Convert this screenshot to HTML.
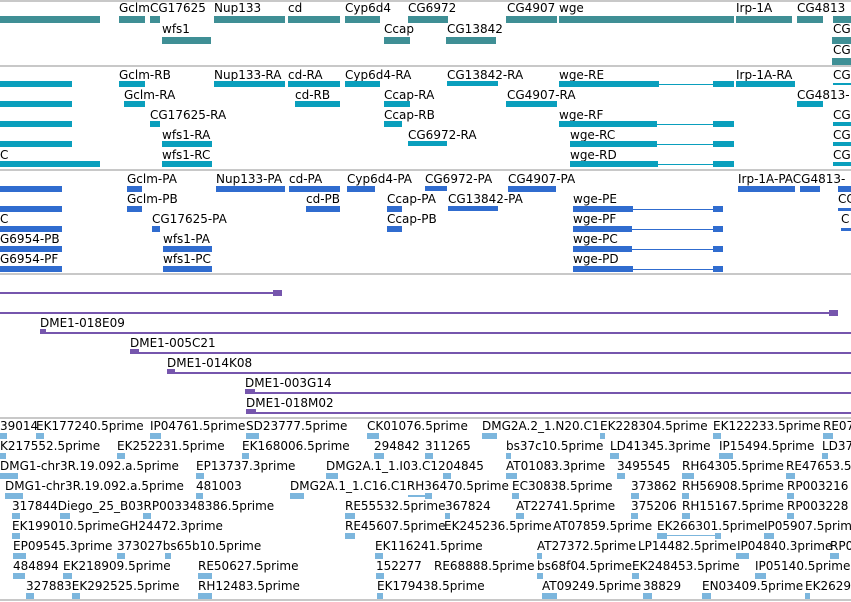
<!DOCTYPE html>
<html><head><meta charset="utf-8"><style>
body{margin:0;width:851px;height:602px;overflow:hidden;background:#fff;position:relative;font-family:"DejaVu Sans","Liberation Sans",sans-serif}
div{position:absolute}
.t{font-size:12px;line-height:14px;color:#000;white-space:nowrap}
.s{left:0;width:851px;height:2px;background:#c8c8c8}
.a{background:#3f8f95;height:7px}
.b{background:#0a9fbd;height:6px}
.c{background:#306ccf;height:6px}
.p{background:#7656ad;height:2px}
.e{background:#7cb6dd;height:6px}
.l{height:1px}
</style></head><body>
<div class="s" style="top:0"></div>
<div class="s" style="top:65px"></div>
<div class="s" style="top:169px"></div>
<div class="s" style="top:273px"></div>
<div class="s" style="top:417px"></div>
<div class="s" style="top:599px"></div>

<!-- track 1 -->
<div class="t" style="left:119px;top:1px">Gclm</div>
<div class="t" style="left:150px;top:1px">CG17625</div>
<div class="t" style="left:214px;top:1px">Nup133</div>
<div class="t" style="left:288px;top:1px">cd</div>
<div class="t" style="left:345px;top:1px">Cyp6d4</div>
<div class="t" style="left:408px;top:1px">CG6972</div>
<div class="t" style="left:507px;top:1px">CG4907</div>
<div class="t" style="left:559px;top:1px">wge</div>
<div class="t" style="left:736px;top:1px">Irp-1A</div>
<div class="t" style="left:797px;top:1px">CG4813</div>
<div class="a" style="left:0;width:100px;top:16px"></div>
<div class="a" style="left:119px;width:26px;top:16px"></div>
<div class="a" style="left:150px;width:10px;top:16px"></div>
<div class="a" style="left:214px;width:71px;top:16px"></div>
<div class="a" style="left:288px;width:52px;top:16px"></div>
<div class="a" style="left:345px;width:35px;top:16px"></div>
<div class="a" style="left:408px;width:40px;top:16px"></div>
<div class="a" style="left:506px;width:51px;top:16px"></div>
<div class="a" style="left:559px;width:175px;top:16px"></div>
<div class="a" style="left:736px;width:56px;top:16px"></div>
<div class="a" style="left:797px;width:26px;top:16px"></div>
<div class="a" style="left:833px;width:18px;top:16px"></div>
<div class="t" style="left:162px;top:22px">wfs1</div>
<div class="t" style="left:384px;top:22px">Ccap</div>
<div class="t" style="left:447px;top:22px">CG13842</div>
<div class="t" style="left:833px;top:22px">CG</div>
<div class="a" style="left:162px;width:49px;top:37px"></div>
<div class="a" style="left:384px;width:26px;top:37px"></div>
<div class="a" style="left:446px;width:50px;top:37px"></div>
<div class="a" style="left:832px;width:19px;top:37px"></div>
<div class="t" style="left:833px;top:43px">CG</div>
<div class="a" style="left:832px;width:19px;top:58px"></div>

<!-- track 2 -->
<div class="t" style="left:119px;top:68px">Gclm-RB</div>
<div class="t" style="left:214px;top:68px">Nup133-RA</div>
<div class="t" style="left:288px;top:68px">cd-RA</div>
<div class="t" style="left:345px;top:68px">Cyp6d4-RA</div>
<div class="t" style="left:447px;top:68px">CG13842-RA</div>
<div class="t" style="left:559px;top:68px">wge-RE</div>
<div class="t" style="left:736px;top:68px">Irp-1A-RA</div>
<div class="t" style="left:833px;top:68px">CG</div>
<div class="b" style="left:0;width:72px;top:81px"></div>
<div class="b" style="left:119px;width:26px;top:81px"></div>
<div class="b" style="left:214px;width:71px;top:81px"></div>
<div class="b" style="left:288px;width:52px;top:81px"></div>
<div class="b" style="left:345px;width:35px;top:81px"></div>
<div class="b" style="left:447px;width:51px;top:81px;height:5px"></div>
<div class="b" style="left:559px;width:100px;top:81px"></div>
<div class="b l" style="left:659px;width:75px;top:84px"></div>
<div class="b" style="left:713px;width:21px;top:81px"></div>
<div class="b" style="left:736px;width:59px;top:81px"></div>
<div class="b" style="left:833px;width:18px;top:83px;height:2px"></div>

<div class="t" style="left:124px;top:88px">Gclm-RA</div>
<div class="t" style="left:295px;top:88px">cd-RB</div>
<div class="t" style="left:384px;top:88px">Ccap-RA</div>
<div class="t" style="left:507px;top:88px">CG4907-RA</div>
<div class="t" style="left:797px;top:88px">CG4813-</div>
<div class="b" style="left:0;width:72px;top:101px"></div>
<div class="b" style="left:124px;width:21px;top:101px"></div>
<div class="b" style="left:295px;width:45px;top:101px"></div>
<div class="b" style="left:384px;width:26px;top:101px"></div>
<div class="b" style="left:506px;width:51px;top:101px"></div>
<div class="b" style="left:797px;width:26px;top:101px"></div>

<div class="t" style="left:150px;top:108px">CG17625-RA</div>
<div class="t" style="left:384px;top:108px">Ccap-RB</div>
<div class="t" style="left:559px;top:108px">wge-RF</div>
<div class="t" style="left:833px;top:108px">CG</div>
<div class="b" style="left:0;width:72px;top:121px"></div>
<div class="b" style="left:150px;width:10px;top:121px"></div>
<div class="b" style="left:384px;width:18px;top:121px"></div>
<div class="b" style="left:559px;width:98px;top:121px"></div>
<div class="b l" style="left:657px;width:77px;top:124px"></div>
<div class="b" style="left:713px;width:21px;top:121px"></div>
<div class="b" style="left:833px;width:18px;top:122px;height:4px"></div>

<div class="t" style="left:162px;top:128px">wfs1-RA</div>
<div class="t" style="left:408px;top:128px">CG6972-RA</div>
<div class="t" style="left:570px;top:128px">wge-RC</div>
<div class="t" style="left:833px;top:128px">CG</div>
<div class="b" style="left:0;width:72px;top:141px"></div>
<div class="b" style="left:162px;width:50px;top:141px"></div>
<div class="b" style="left:408px;width:39px;top:141px;height:5px"></div>
<div class="b" style="left:570px;width:87px;top:141px"></div>
<div class="b l" style="left:657px;width:77px;top:144px"></div>
<div class="b" style="left:713px;width:21px;top:141px"></div>
<div class="b" style="left:833px;width:18px;top:142px;height:4px"></div>

<div class="t" style="left:0;top:148px">C</div>
<div class="t" style="left:162px;top:148px">wfs1-RC</div>
<div class="t" style="left:570px;top:148px">wge-RD</div>
<div class="t" style="left:833px;top:148px">CG</div>
<div class="b" style="left:0;width:100px;top:161px"></div>
<div class="b" style="left:162px;width:50px;top:161px"></div>
<div class="b" style="left:570px;width:88px;top:161px"></div>
<div class="b l" style="left:658px;width:76px;top:164px"></div>
<div class="b" style="left:713px;width:21px;top:161px"></div>
<div class="b" style="left:833px;width:18px;top:162px;height:4px"></div>

<!-- track 3 -->
<div class="t" style="left:127px;top:172px">Gclm-PA</div>
<div class="t" style="left:216px;top:172px">Nup133-PA</div>
<div class="t" style="left:289px;top:172px">cd-PA</div>
<div class="t" style="left:347px;top:172px">Cyp6d4-PA</div>
<div class="t" style="left:425px;top:172px">CG6972-PA</div>
<div class="t" style="left:508px;top:172px">CG4907-PA</div>
<div class="t" style="left:738px;top:172px">Irp-1A-PACG4813-</div>
<div class="c" style="left:0;width:62px;top:186px"></div>
<div class="c" style="left:127px;width:15px;top:186px"></div>
<div class="c" style="left:216px;width:69px;top:186px"></div>
<div class="c" style="left:289px;width:51px;top:186px"></div>
<div class="c" style="left:347px;width:28px;top:186px"></div>
<div class="c" style="left:425px;width:22px;top:186px;height:5px"></div>
<div class="c" style="left:508px;width:48px;top:186px"></div>
<div class="c" style="left:738px;width:57px;top:186px"></div>
<div class="c" style="left:800px;width:20px;top:186px"></div>
<div class="c" style="left:838px;width:13px;top:186px"></div>

<div class="t" style="left:127px;top:192px">Gclm-PB</div>
<div class="t" style="left:306px;top:192px">cd-PB</div>
<div class="t" style="left:387px;top:192px">Ccap-PA</div>
<div class="t" style="left:448px;top:192px">CG13842-PA</div>
<div class="t" style="left:573px;top:192px">wge-PE</div>
<div class="t" style="left:838px;top:192px">CC</div>
<div class="c" style="left:0;width:62px;top:206px"></div>
<div class="c" style="left:127px;width:15px;top:206px"></div>
<div class="c" style="left:306px;width:34px;top:206px"></div>
<div class="c" style="left:387px;width:15px;top:206px"></div>
<div class="c" style="left:448px;width:50px;top:206px;height:5px"></div>
<div class="c" style="left:573px;width:60px;top:206px"></div>
<div class="c l" style="left:633px;width:90px;top:209px"></div>
<div class="c" style="left:713px;width:10px;top:206px"></div>
<div class="c" style="left:838px;width:13px;top:208px;height:3px"></div>

<div class="t" style="left:0;top:212px">C</div>
<div class="t" style="left:152px;top:212px">CG17625-PA</div>
<div class="t" style="left:387px;top:212px">Ccap-PB</div>
<div class="t" style="left:573px;top:212px">wge-PF</div>
<div class="t" style="left:841px;top:212px">C</div>
<div class="c" style="left:0;width:62px;top:226px"></div>
<div class="c" style="left:152px;width:8px;top:226px"></div>
<div class="c" style="left:387px;width:15px;top:226px"></div>
<div class="c" style="left:573px;width:59px;top:226px"></div>
<div class="c l" style="left:632px;width:91px;top:229px"></div>
<div class="c" style="left:713px;width:10px;top:226px"></div>
<div class="c" style="left:841px;width:10px;top:228px;height:3px"></div>

<div class="t" style="left:0;top:232px">G6954-PB</div>
<div class="t" style="left:163px;top:232px">wfs1-PA</div>
<div class="t" style="left:573px;top:232px">wge-PC</div>
<div class="c" style="left:0;width:62px;top:246px"></div>
<div class="c" style="left:163px;width:49px;top:246px"></div>
<div class="c" style="left:573px;width:59px;top:246px"></div>
<div class="c l" style="left:632px;width:91px;top:249px"></div>
<div class="c" style="left:713px;width:10px;top:246px"></div>

<div class="t" style="left:0;top:252px">G6954-PF</div>
<div class="t" style="left:163px;top:252px">wfs1-PC</div>
<div class="t" style="left:573px;top:252px">wge-PD</div>
<div class="c" style="left:0;width:62px;top:266px"></div>
<div class="c" style="left:163px;width:49px;top:266px"></div>
<div class="c" style="left:573px;width:60px;top:266px"></div>
<div class="c l" style="left:633px;width:90px;top:269px"></div>
<div class="c" style="left:713px;width:10px;top:266px"></div>

<!-- track 4 -->
<div class="p" style="left:0;width:280px;top:292px"></div>
<div class="p" style="left:273px;width:9px;top:290px;height:6px"></div>
<div class="p" style="left:0;width:836px;top:312px"></div>
<div class="p" style="left:829px;width:9px;top:310px;height:6px"></div>
<div class="t" style="left:40px;top:316px">DME1-018E09</div>
<div class="p" style="left:40px;width:811px;top:332px"></div>
<div class="p" style="left:40px;width:6px;top:329px;height:5px"></div>
<div class="t" style="left:130px;top:336px">DME1-005C21</div>
<div class="p" style="left:130px;width:721px;top:352px"></div>
<div class="p" style="left:130px;width:9px;top:349px;height:5px"></div>
<div class="t" style="left:167px;top:356px">DME1-014K08</div>
<div class="p" style="left:167px;width:684px;top:372px"></div>
<div class="p" style="left:167px;width:8px;top:369px;height:5px"></div>
<div class="t" style="left:245px;top:376px">DME1-003G14</div>
<div class="p" style="left:245px;width:606px;top:392px"></div>
<div class="p" style="left:245px;width:10px;top:389px;height:5px"></div>
<div class="t" style="left:246px;top:396px">DME1-018M02</div>
<div class="p" style="left:246px;width:605px;top:412px"></div>
<div class="p" style="left:246px;width:10px;top:409px;height:5px"></div>

<!-- track 5 -->
<div class="t" style="left:0;top:419px">39014</div><div class="t" style="left:36px;top:419px">EK177240.5prime</div><div class="t" style="left:150px;top:419px">IP04761.5prime</div><div class="t" style="left:246px;top:419px">SD23777.5prime</div><div class="t" style="left:367px;top:419px">CK01076.5prime</div><div class="t" style="left:482px;top:419px">DMG2A.2_1.N20.C1</div><div class="t" style="left:600px;top:419px">EK228304.5prime</div><div class="t" style="left:713px;top:419px">EK122233.5prime</div><div class="t" style="left:823px;top:419px">RE07</div>
<div class="e" style="left:0;width:7px;top:433px"></div><div class="e" style="left:36px;width:8px;top:433px"></div><div class="e" style="left:150px;width:11px;top:433px"></div><div class="e" style="left:246px;width:13px;top:433px"></div><div class="e" style="left:367px;width:12px;top:433px"></div><div class="e" style="left:482px;width:15px;top:433px"></div><div class="e" style="left:600px;width:5px;top:433px"></div><div class="e" style="left:713px;width:8px;top:433px"></div><div class="e" style="left:823px;width:10px;top:433px"></div>

<div class="t" style="left:0;top:439px">K217552.5prime</div><div class="t" style="left:117px;top:439px">EK252231.5prime</div><div class="t" style="left:242px;top:439px">EK168006.5prime</div><div class="t" style="left:374px;top:439px">294842</div><div class="t" style="left:425px;top:439px">311265</div><div class="t" style="left:506px;top:439px">bs37c10.5prime</div><div class="t" style="left:610px;top:439px">LD41345.3prime</div><div class="t" style="left:719px;top:439px">IP15494.5prime</div><div class="t" style="left:822px;top:439px">LD370</div>
<div class="e" style="left:0;width:6px;top:453px"></div><div class="e" style="left:117px;width:8px;top:453px"></div><div class="e" style="left:242px;width:7px;top:453px"></div><div class="e" style="left:374px;width:10px;top:453px"></div><div class="e" style="left:425px;width:8px;top:453px"></div><div class="e" style="left:506px;width:5px;top:453px"></div><div class="e" style="left:610px;width:9px;top:453px"></div><div class="e" style="left:719px;width:14px;top:453px"></div><div class="e" style="left:822px;width:6px;top:453px"></div>

<div class="t" style="left:0;top:459px">DMG1-chr3R.19.092.a.5prime</div><div class="t" style="left:196px;top:459px">EP13737.3prime</div><div class="t" style="left:326px;top:459px">DMG2A.1_1.I03.C1204845</div><div class="t" style="left:506px;top:459px">AT01083.3prime</div><div class="t" style="left:617px;top:459px">3495545</div><div class="t" style="left:682px;top:459px">RH64305.5prime</div><div class="t" style="left:786px;top:459px">RE47653.5</div>
<div class="e" style="left:0;width:18px;top:473px"></div><div class="e" style="left:196px;width:8px;top:473px"></div><div class="e" style="left:326px;width:12px;top:473px"></div><div class="e" style="left:443px;width:8px;top:473px"></div><div class="e" style="left:506px;width:11px;top:473px"></div><div class="e" style="left:617px;width:8px;top:473px"></div><div class="e" style="left:682px;width:12px;top:473px"></div><div class="e" style="left:786px;width:9px;top:473px"></div>

<div class="t" style="left:5px;top:479px">DMG1-chr3R.19.092.a.5prime</div><div class="t" style="left:196px;top:479px">481003</div><div class="t" style="left:290px;top:479px">DMG2A.1_1.C16.C1RH36470.5prime</div><div class="t" style="left:512px;top:479px">EC30838.5prime</div><div class="t" style="left:631px;top:479px">373862</div><div class="t" style="left:682px;top:479px">RH56908.5prime</div><div class="t" style="left:787px;top:479px">RP003216</div>
<div class="e" style="left:5px;width:18px;top:493px"></div><div class="e" style="left:196px;width:7px;top:493px"></div><div class="e" style="left:290px;width:14px;top:493px"></div><div class="e" style="left:408px;width:17px;top:495px;height:2px"></div><div class="e" style="left:425px;width:7px;top:493px"></div><div class="e" style="left:512px;width:7px;top:493px"></div><div class="e" style="left:631px;width:8px;top:493px"></div><div class="e" style="left:682px;width:7px;top:493px"></div><div class="e" style="left:787px;width:7px;top:493px"></div>

<div class="t" style="left:12px;top:499px">317844Diego_25_B03RP003348386.5prime</div><div class="t" style="left:345px;top:499px">RE55532.5prime</div><div class="t" style="left:445px;top:499px">367824</div><div class="t" style="left:516px;top:499px">AT22741.5prime</div><div class="t" style="left:631px;top:499px">375206</div><div class="t" style="left:682px;top:499px">RH15167.5prime</div><div class="t" style="left:787px;top:499px">RP003228</div>
<div class="e" style="left:12px;width:8px;top:513px"></div><div class="e" style="left:60px;width:10px;top:513px"></div><div class="e" style="left:143px;width:8px;top:513px"></div><div class="e" style="left:345px;width:10px;top:513px"></div><div class="e" style="left:445px;width:5px;top:513px"></div><div class="e" style="left:516px;width:8px;top:513px"></div><div class="e" style="left:631px;width:7px;top:513px"></div><div class="e" style="left:682px;width:8px;top:513px"></div><div class="e" style="left:787px;width:7px;top:513px"></div>

<div class="t" style="left:12px;top:519px">EK199010.5prime</div><div class="t" style="left:120px;top:519px">GH24472.3prime</div><div class="t" style="left:345px;top:519px">RE45607.5prime</div><div class="t" style="left:444px;top:519px">EK245236.5prime</div><div class="t" style="left:553px;top:519px">AT07859.5prime</div><div class="t" style="left:657px;top:519px">EK266301.5prime</div><div class="t" style="left:764px;top:519px">IP05907.5prime</div>
<div class="e" style="left:12px;width:8px;top:533px"></div><div class="e" style="left:345px;width:10px;top:533px"></div><div class="e" style="left:657px;width:10px;top:533px"></div><div class="e" style="left:667px;width:50px;top:535px;height:1px"></div><div class="e" style="left:715px;width:6px;top:533px"></div><div class="e" style="left:764px;width:10px;top:533px"></div>

<div class="t" style="left:13px;top:539px">EP09545.3prime</div><div class="t" style="left:117px;top:539px">373027bs65b10.5prime</div><div class="t" style="left:375px;top:539px">EK116241.5prime</div><div class="t" style="left:537px;top:539px">AT27372.5prime</div><div class="t" style="left:638px;top:539px">LP14482.5prime</div><div class="t" style="left:737px;top:539px">IP04840.3prime</div><div class="t" style="left:830px;top:539px">RP0</div>
<div class="e" style="left:13px;width:13px;top:553px"></div><div class="e" style="left:117px;width:8px;top:553px"></div><div class="e" style="left:165px;width:6px;top:553px"></div><div class="e" style="left:375px;width:8px;top:553px"></div><div class="e" style="left:537px;width:5px;top:553px"></div><div class="e" style="left:736px;width:13px;top:553px"></div><div class="e" style="left:830px;width:9px;top:553px"></div>

<div class="t" style="left:13px;top:559px">484894</div><div class="t" style="left:63px;top:559px">EK218909.5prime</div><div class="t" style="left:198px;top:559px">RE50627.5prime</div><div class="t" style="left:376px;top:559px">152277</div><div class="t" style="left:434px;top:559px">RE68888.5prime</div><div class="t" style="left:537px;top:559px">bs68f04.5prime</div><div class="t" style="left:632px;top:559px">EK248453.5prime</div><div class="t" style="left:755px;top:559px">IP05140.5prime</div>
<div class="e" style="left:13px;width:12px;top:573px"></div><div class="e" style="left:63px;width:9px;top:573px"></div><div class="e" style="left:198px;width:14px;top:573px"></div><div class="e" style="left:376px;width:8px;top:573px"></div><div class="e" style="left:537px;width:6px;top:573px"></div><div class="e" style="left:632px;width:7px;top:573px"></div><div class="e" style="left:755px;width:11px;top:573px"></div>

<div class="t" style="left:26px;top:579px">327883EK292525.5prime</div><div class="t" style="left:198px;top:579px">RH12483.5prime</div><div class="t" style="left:377px;top:579px">EK179438.5prime</div><div class="t" style="left:542px;top:579px">AT09249.5prime</div><div class="t" style="left:643px;top:579px">38829</div><div class="t" style="left:702px;top:579px">EN03409.5prime</div><div class="t" style="left:805px;top:579px">EK2629</div>
<div class="e" style="left:26px;width:8px;top:593px"></div><div class="e" style="left:72px;width:8px;top:593px"></div><div class="e" style="left:198px;width:14px;top:593px"></div><div class="e" style="left:377px;width:6px;top:593px"></div><div class="e" style="left:542px;width:15px;top:593px"></div><div class="e" style="left:643px;width:9px;top:593px"></div><div class="e" style="left:702px;width:9px;top:593px"></div><div class="e" style="left:805px;width:5px;top:593px"></div>
</body></html>
